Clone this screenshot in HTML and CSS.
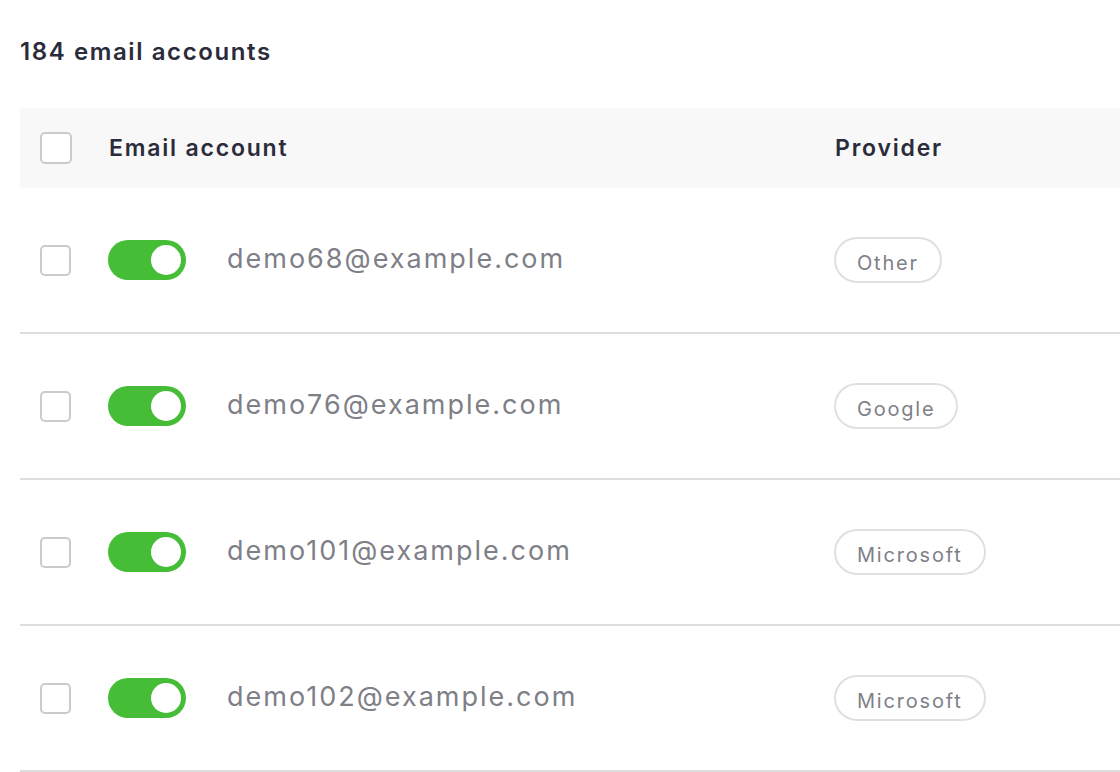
FILE: index.html
```html
<!DOCTYPE html>
<html lang="en">
<head>
<meta charset="utf-8">
<title>Email accounts</title>
<link rel="stylesheet" href="styles.css">
</head>
<body>
<main class="accounts">
  <h1 class="accounts-count">184 email accounts</h1>
  <div class="table">
    <div class="row row-head">
      <div class="cell-main">
        <span class="check"></span>
        <span class="head-label">Email account</span>
      </div>
      <div class="cell-provider">
        <span class="head-label">Provider</span>
      </div>
    </div>

    <div class="row">
      <div class="cell-main">
        <span class="check"></span>
        <span class="toggle on"><span class="knob"></span></span>
        <span class="email">demo68@example.com</span>
      </div>
      <div class="cell-provider"><span class="pill">Other</span></div>
    </div>

    <div class="row">
      <div class="cell-main">
        <span class="check"></span>
        <span class="toggle on"><span class="knob"></span></span>
        <span class="email">demo76@example.com</span>
      </div>
      <div class="cell-provider"><span class="pill">Google</span></div>
    </div>

    <div class="row">
      <div class="cell-main">
        <span class="check"></span>
        <span class="toggle on"><span class="knob"></span></span>
        <span class="email">demo101@example.com</span>
      </div>
      <div class="cell-provider"><span class="pill">Microsoft</span></div>
    </div>

    <div class="row">
      <div class="cell-main">
        <span class="check"></span>
        <span class="toggle on"><span class="knob"></span></span>
        <span class="email">demo102@example.com</span>
      </div>
      <div class="cell-provider"><span class="pill">Microsoft</span></div>
    </div>
  </div>
</main>
</body>
</html>
```

FILE: styles.css
```css
html, body {
  margin: 0;
  padding: 0;
  background: #ffffff;
  overflow: hidden;
}

body {
  font-family: "Inter", "DejaVu Sans", sans-serif;
  color: #2b2c3b;
}

.accounts {
  width: 1120px;
  overflow: hidden;
}

.accounts-count {
  margin: 0;
  height: 108px;
  padding: 37px 20px 0;
  box-sizing: border-box;
  font-size: 24px;
  line-height: 30px;
  font-weight: 600;
  letter-spacing: 1.6px;
  color: #2b2c3b;
}

.table {
  margin-left: 20px;
  width: 1100px;
}

.row {
  display: grid;
  grid-template-columns: 814px 1fr;
  align-items: center;
  height: 144px;
  border-bottom: 2px solid #dddddd;
}

.row-head {
  height: 80px;
  border-bottom: none;
  background: #f8f8f9;
}

.cell-main {
  display: flex;
  align-items: center;
  padding-left: 20px;
}

.check {
  flex: none;
  width: 31px;
  height: 31px;
  box-sizing: border-box;
  border: 2px solid #cbcbcb;
  border-radius: 5px;
  background: #fff;
}

.row-head .check {
  width: 32px;
  height: 32px;
}

.head-label {
  font-size: 23px;
  font-weight: 600;
  letter-spacing: 1.8px;
  color: #2b2c3b;
}

.row-head .cell-provider .head-label {
  margin-left: 1px;
}

.row-head .check + .head-label {
  margin-left: 37px;
}

.toggle {
  flex: none;
  margin-left: 37px;
  width: 78px;
  height: 40px;
  border-radius: 20px;
  background: #45bd36;
  display: flex;
  align-items: center;
  justify-content: flex-end;
  padding-right: 5px;
  box-sizing: border-box;
}

.knob {
  width: 30px;
  height: 30px;
  border-radius: 50%;
  background: #ffffff;
}

.email {
  margin-left: 41px;
  padding-bottom: 4px;
  font-size: 27px;
  letter-spacing: 2px;
  color: #7e7f87;
}

.cell-provider {
  display: flex;
  align-items: center;
}

.pill {
  display: inline-block;
  height: 46px;
  line-height: 44px;
  padding: 2px 21px 0;
  box-sizing: border-box;
  border: 2px solid #e0e0e0;
  border-radius: 23px;
  font-size: 20px;
  letter-spacing: 1.8px;
  color: #7e7f87;
}
```
